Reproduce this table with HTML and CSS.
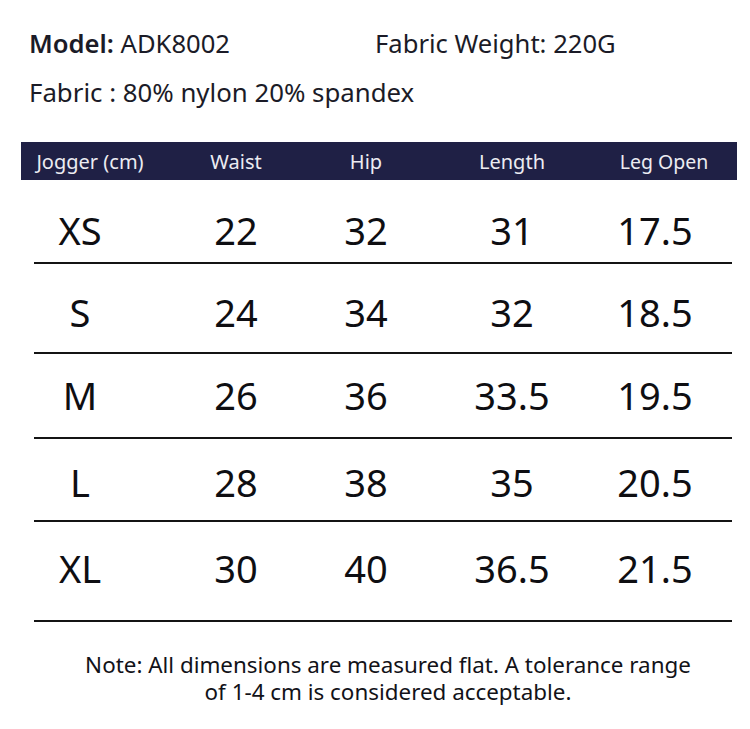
FILE: index.html
```html
<!DOCTYPE html>
<html>
<head>
<meta charset="utf-8">
<link rel="stylesheet" href="styles.css">
</head>
<body>
<div class="sheet">
  <div class="specs">
    <div class="spec-line first">
      <span class="spec"><b>Model:</b> ADK8002</span>
      <span class="spec">Fabric Weight: 220G</span>
    </div>
    <div class="spec-line second">Fabric : 80% nylon 20% spandex</div>
  </div>

  <div class="head">
    <span class="hc">Jogger (cm)</span>
    <span class="hc">Waist</span>
    <span class="hc">Hip</span>
    <span class="hc">Length</span>
    <span class="hc">Leg Open</span>
  </div>

  <div class="rows">
    <div class="row r1"><span class="c">XS</span><span class="c">22</span><span class="c">32</span><span class="c">31</span><span class="c">17.5</span></div>
    <div class="row r2"><span class="c">S</span><span class="c">24</span><span class="c">34</span><span class="c">32</span><span class="c">18.5</span></div>
    <div class="row r3"><span class="c">M</span><span class="c">26</span><span class="c">36</span><span class="c">33.5</span><span class="c">19.5</span></div>
    <div class="row r4"><span class="c">L</span><span class="c">28</span><span class="c">38</span><span class="c">35</span><span class="c">20.5</span></div>
    <div class="row r5"><span class="c">XL</span><span class="c">30</span><span class="c">40</span><span class="c">36.5</span><span class="c">21.5</span></div>
  </div>

  <p class="note">Note: All dimensions are measured flat. A tolerance range<br>of 1-4 cm is considered acceptable.</p>
</div>
</body>
</html>
```

FILE: styles.css
```css
* { box-sizing: border-box; }
html, body { margin: 0; padding: 0; background: #ffffff; }
body {
  font-family: "Noto Sans", "Open Sans", sans-serif;
  color: #1b1b27;
  width: 750px;
  height: 729px;
  overflow: hidden;
}
.sheet { display: flex; flex-direction: column; }

.specs { padding: 20px 0 0 29px; }
.spec-line { line-height: 48px; white-space: nowrap; }
.spec-line.first {
  display: grid;
  grid-template-columns: 346px auto;
  font-size: 25.6px;
}
.spec-line.first b { font-weight: 600; }
.spec-line.second { font-size: 25.8px; }

.head {
  margin: 26px 13px 0 21px;
  height: 38px;
  background: #1f2045;
  color: #ececf2;
  display: flex;
  align-items: center;
  padding-left: 14px;
  font-size: 20px;
}
.hc { flex: 0 0 110px; text-align: center; white-space: nowrap; }
.hc:nth-child(2) { margin-left: 36px; }
.hc:nth-child(3) { margin-left: 20px; }
.hc:nth-child(4) { margin-left: 36px; }
.hc:nth-child(5) { margin-left: 42px; font-size: 19.5px; }

.rows { margin-left: 34px; width: 698px; color: #0e0e12; }
.row {
  display: flex;
  align-items: flex-start;
  font-size: 38px;
  line-height: 38px;
  border-bottom: 2px solid #141414;
}
.c { flex: 0 0 92px; text-align: center; white-space: nowrap; }
.c:nth-child(2) { margin-left: 64px; }
.c:nth-child(3) { margin-left: 38px; }
.c:nth-child(4) { margin-left: 54px; }
.c:nth-child(5) { margin-left: 51px; }

.r1 { height: 84px; padding-top: 31px; }
.r2 { height: 90px; padding-top: 29px; }
.r3 { height: 85px; padding-top: 22px; }
.r4 { height: 83px; padding-top: 24px; }
.r5 { height: 100px; padding-top: 27px; }

.note {
  margin: 29px 0 0 32px;
  width: 712px;
  text-align: center;
  font-size: 22.4px;
  line-height: 27px;
  color: #121218;
}
```
